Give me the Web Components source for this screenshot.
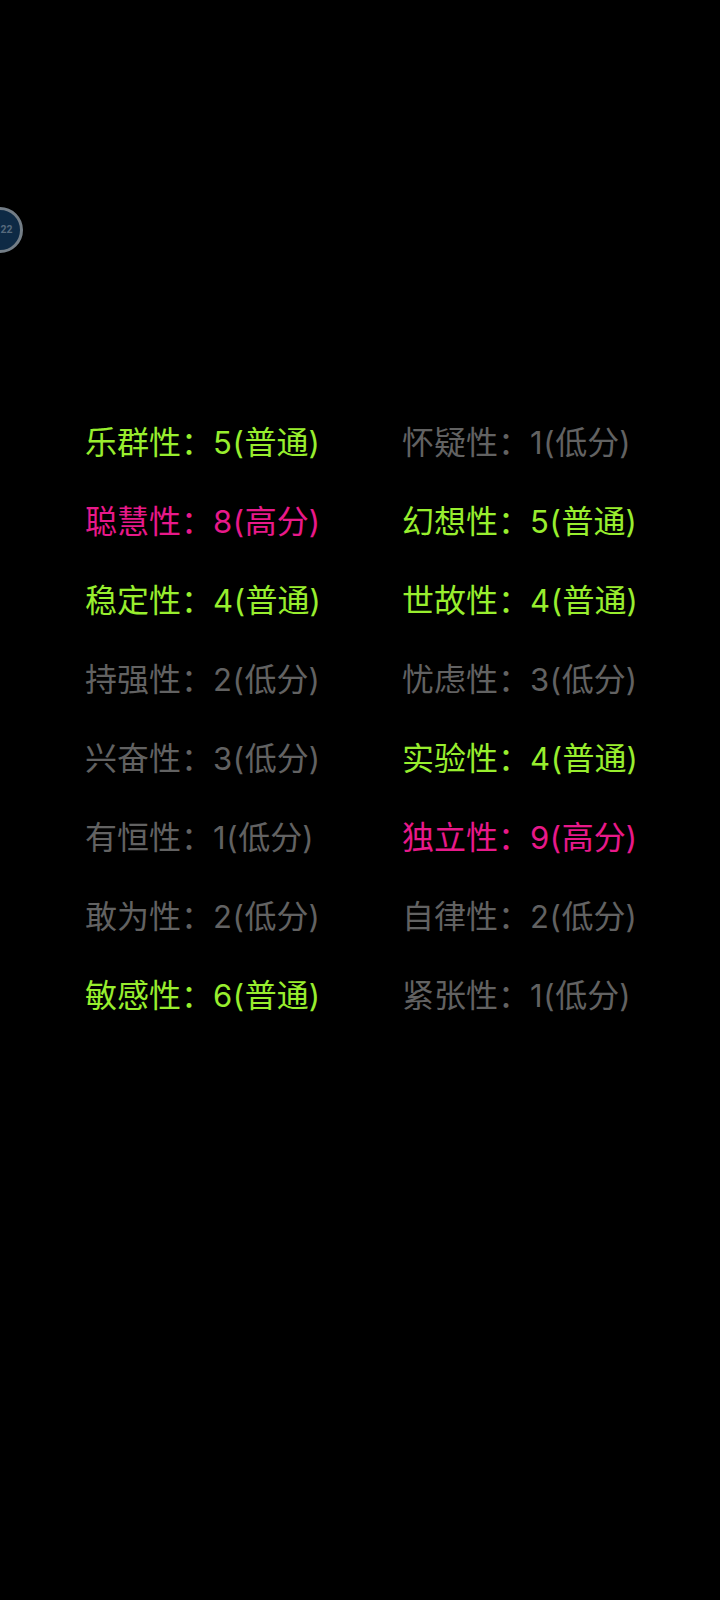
<!DOCTYPE html>
<html><head><meta charset="utf-8"><style>html,body{margin:0;background:#000;height:1600px;overflow:hidden}</style></head><body>
<trait-page></trait-page>
<script>
class FloatBadge extends HTMLElement{constructor(){super();this.attachShadow({mode:'open'}).innerHTML=`<style>
:host{display:block;position:absolute;left:-23px;top:207px;width:46px;height:46px;box-sizing:border-box;border-radius:50%;border:3.5px solid #737d86;background:#0e2a45;color:#56697c;font:700 10.5px/39px Roboto,sans-serif;text-align:right;padding-right:7.5px}
</style><slot></slot>`}}
class TraitItem extends HTMLElement{constructor(){super();const n=this.getAttribute('name'),s=this.getAttribute('score'),t=this.getAttribute('tag');this.attachShadow({mode:'open'}).innerHTML=`<style>
:host{display:block;height:79px;white-space:nowrap;font:32px/79px "Noto Sans CJK SC",sans-serif;color:#626262}
:host([level=mid]){color:#98ee2e}
:host([level=high]){color:#e8198a}
.n{font-family:Inter,"Noto Sans CJK SC",sans-serif;font-size:31px;letter-spacing:.6px}
</style>${n}：<span class="n">${s}(</span>${t}<span class="n">)</span>`}}
class TraitPage extends HTMLElement{constructor(){super();const d=[['乐群性',5,'普通'],['怀疑性',1,'低分'],['聪慧性',8,'高分'],['幻想性',5,'普通'],['稳定性',4,'普通'],['世故性',4,'普通'],['持强性',2,'低分'],['忧虑性',3,'低分'],['兴奋性',3,'低分'],['实验性',4,'普通'],['有恒性',1,'低分'],['独立性',9,'高分'],['敢为性',2,'低分'],['自律性',2,'低分'],['敏感性',6,'普通'],['紧张性',1,'低分']];const L={'普通':'mid','低分':'low','高分':'high'};
this.attachShadow({mode:'open'}).innerHTML=`<style>
:host{display:block;width:720px;height:1600px;position:relative;overflow:hidden;background:#000}
.grid{display:grid;grid-template-columns:317px 317px;padding:401px 0 0 85px}
</style><float-badge>22</float-badge><div class="grid">${d.map(([a,b,c])=>`<trait-item level="${L[c]}" name="${a}" score="${b}" tag="${c}"></trait-item>`).join('')}</div>`}}
customElements.define('float-badge',FloatBadge);customElements.define('trait-item',TraitItem);customElements.define('trait-page',TraitPage);
</script></body></html>
